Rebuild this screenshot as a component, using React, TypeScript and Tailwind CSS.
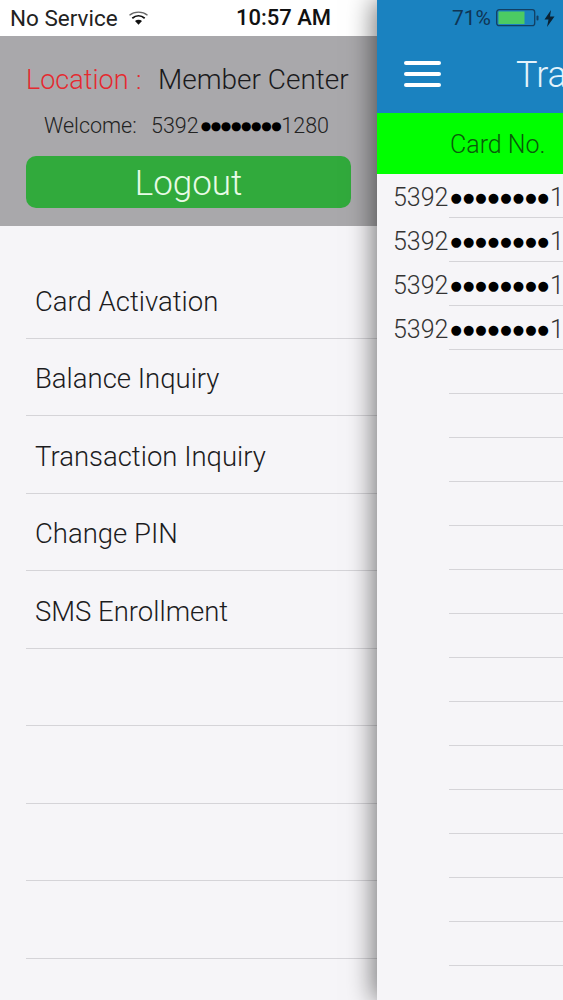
import React from 'react';

const menuItems = ['Card Activation', 'Balance Inquiry', 'Transaction Inquiry', 'Change PIN', 'SMS Enrollment', '', '', '', ''];
const cardRows = ['5392', '5392', '5392', '5392', '', '', '', '', '', '', '', '', '', '', '', '', '', '', ''];

function WifiIcon() {
  return (
    <svg width="21" height="16" viewBox="0 0 21 16" fill="none" className="block">
      <path d="M1.5 5.2C6.5 1 14.500 1 19.500 5.200" stroke="#666" strokeWidth="1.300" />
      <path d="M4.300 8.200C8 5 13 5 16.700 8.200" stroke="#111" strokeWidth="1.800" />
      <path d="M7 11C9 9.300 12 9.300 14 11L10.500 14.800Z" fill="#111" />
    </svg>
  );
}

function BatteryIcon() {
  return (
    <svg width="43" height="18" viewBox="0 0 43 18" fill="none" className="block">
      <rect x="0.700" y="0.700" width="38" height="16" rx="2.500" stroke="#123f63" strokeWidth="1.300" />
      <rect x="2.500" y="2.500" width="26" height="12.500" fill="#4ccb63" />
      <rect x="40.500" y="6.500" width="2" height="5" rx="1" fill="#123f63" />
    </svg>
  );
}

function BoltIcon() {
  return (
    <svg width="11" height="17" viewBox="0 0 11 17" className="block">
      <path d="M7 0L0.500 9.500H4.500L3 17L10.500 6.500H6Z" fill="#0b2233" />
    </svg>
  );
}

export default function App() {
  return (
    <div className="flex h-[1000px] w-[563px] overflow-hidden bg-[#f6f5f8] font-['Roboto','Liberation_Sans',sans-serif]">
      {/* Drawer */}
      <div className="w-[377px] flex-none">
        <div className="flex h-[36px] items-center bg-white pl-[10px] text-[#222]">
          <span className="w-[118px] text-[22.500px] leading-none">No Service</span>
          <WifiIcon />
          <span className="ml-[87px] text-[22px] font-medium leading-none text-[#111]">10:57 AM</span>
        </div>
        <div className="flex h-[190px] flex-col bg-[#a9a8ab] px-[26px] pt-[28px]">
          <div className="flex items-center font-light leading-[32px] text-[#1a1a1c]">
            <span className="w-[110px] text-[27px] text-[#e52a30]">Location</span>
            <span className="w-[23px] text-[26px] text-[#e52a30]">:</span>
            <span className="-ml-[1px] text-[28px]">Member Center</span>
          </div>
          <div className="mt-[18px] flex items-center pl-[18px] font-light leading-[24px] text-[#222]">
            <span className="w-[107px] text-[21.500px]">Welcome:</span>
            <span className="text-[21.500px]">5392</span>
            <span className="ml-[2px] font-['DejaVu_Sans'] text-[12px] font-normal tracking-[-0.400px] text-black">●●●●●●●●</span>
            <span className="text-[21.500px]">1280</span>
          </div>
          <button className="mt-[18px] h-[52px] w-full rounded-[10px] bg-[#31aa3c] pt-[3px] text-[35px] font-light leading-none text-[#e8fbe6]">
            Logout
          </button>
        </div>
        <div className="pt-[35px]">
          {menuItems.map((item, i) => (
            <div key={i} className="ml-[26px] flex h-[77.500px] items-center border-b border-[#d5d4d8] pl-[9px] pt-[4px] text-[27.500px] font-light text-[#1c1c1e]">
              {item}
            </div>
          ))}
        </div>
      </div>

      {/* Main panel pushed aside */}
      <div className="w-[560px] flex-none bg-[#f6f5f8] shadow-[-4px_0_24px_rgba(0,0,0,0.5)]">
        <div className="h-[113px] bg-[#1a82c0]">
          <div className="flex h-[36px] items-center pl-[75px]">
            <span className="w-[44px] text-[21px] leading-none text-[#0f3554]">71%</span>
            <BatteryIcon />
            <span className="ml-[5px]"><BoltIcon /></span>
          </div>
          <div className="flex h-[77px] items-center">
            <div className="ml-[27px] flex w-[37px] flex-col gap-[7px] pb-[1px]">
              <div className="h-[4px] rounded-full bg-white" />
              <div className="h-[4px] rounded-full bg-white" />
              <div className="h-[4px] rounded-full bg-white" />
            </div>
            <span className="ml-[75px] text-[36px] font-light leading-none text-[#e4f3fb]">Transaction</span>
          </div>
        </div>
        <div className="flex h-[61px] items-center bg-[#00ff00] pl-[73px] pt-[2px] text-[25px] font-light text-[#0a5a0a]">
          Card No.
        </div>
        {cardRows.map((card, i) => (
          <div key={i} className="relative flex h-[44px] items-center pl-[16px] pt-[3px]">
            {card && (
              <>
                <span className="text-[25px] font-light text-[#333]">{card}</span>
                <span className="ml-[2px] font-['DejaVu_Sans'] text-[13px] tracking-[1.100px] text-black">●●●●●●●●</span>
                <span className="text-[25px] font-light text-[#333]">1280</span>
              </>
            )}
            <div className="absolute bottom-0 left-[72px] right-0 h-px bg-[#d5d4d8]" />
          </div>
        ))}
      </div>
    </div>
  );
}
